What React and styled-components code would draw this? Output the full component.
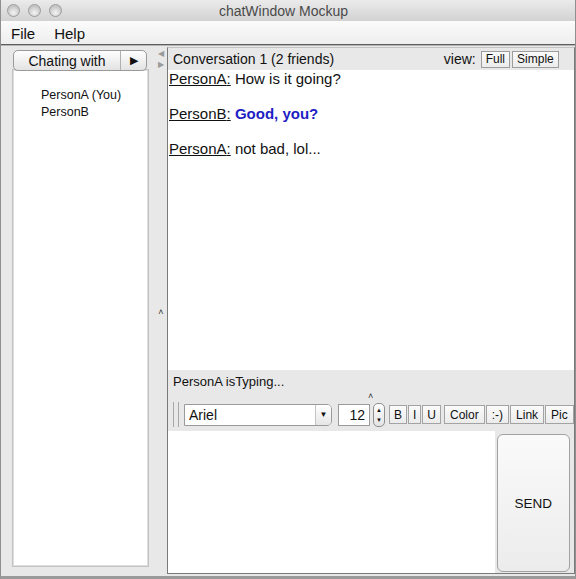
import styled, { createGlobalStyle } from "styled-components";

const GlobalStyle = createGlobalStyle`
    html, body {
        margin: 0;
        padding: 0;
        background: #e8e8e8;
    }
    * {
        box-sizing: border-box;
    }
`;

const Window = styled.div`
    width: 576px;
    height: 579px;
    display: flex;
    flex-direction: column;
    background: #e8e8e8;
    border-left: 1px solid #8f8f8f;
    border-right: 1px solid #8f8f8f;
    border-bottom: 3px solid #9a9a9a;
    font-family: "Liberation Sans", Arial, sans-serif;
    color: #111;
    overflow: hidden;
`;

const TitleBar = styled.div`
    height: 21px;
    flex: none;
    display: flex;
    align-items: center;
    padding-left: 6px;
    background: linear-gradient(#ebebeb, #d2d2d2);
`;

const Lights = styled.div`
    display: flex;
    gap: 8px;
`;

const Light = styled.span`
    width: 13px;
    height: 13px;
    border-radius: 50%;
    border: 1px solid #9c9c9c;
    background: radial-gradient(circle at 50% 70%, #f4f4f4, #c4c4c4 70%);
`;

const Title = styled.div`
    flex: 1;
    text-align: center;
    font-size: 14px;
    color: #4a4a4a;
    margin-right: 70px;
`;

const MenuBar = styled.div`
    height: 24px;
    flex: none;
    display: flex;
    align-items: center;
    gap: 19px;
    padding: 2px 0 0 10px;
    background: linear-gradient(#fbfbfb, #eeeeee);
    border-bottom: 1px solid #5e5e5e;
    box-shadow: 0 1px 0 #b5b5b5;
    font-size: 15px;
`;

const Body = styled.div`
    flex: 1;
    display: flex;
    min-height: 0;
    padding-top: 1px;
`;

const LeftPane = styled.div`
    width: 150px;
    flex: none;
    display: flex;
    flex-direction: column;
    padding: 4px 2px 9px 11px;
`;

const TabButton = styled.div`
    height: 21px;
    margin: 0 2px 0 1px;
    display: flex;
    border: 1px solid #9a9a9a;
    border-radius: 5px;
    background: linear-gradient(#fefefe, #e3e3e3);
    font-size: 14px;
    position: relative;
    z-index: 1;
`;

const TabLabel = styled.div`
    flex: 1;
    display: flex;
    align-items: center;
    justify-content: center;
    border-right: 1px solid #b0b0b0;
`;

const TabArrow = styled.div`
    width: 25px;
    display: flex;
    align-items: center;
    justify-content: center;
    font-size: 11px;
`;

const ListBox = styled.div`
    flex: 1;
    margin-top: -2px;
    background: #fff;
    border: 1px solid #c2c2c2;
    box-shadow: inset 0 0 0 1px #dedede;
    padding: 17px 0 0 28px;
    font-size: 12.5px;
    line-height: 17px;
`;

const Divider = styled.div`
    width: 16px;
    flex: none;
    display: flex;
    flex-direction: column;
    align-items: center;
    padding: 2px 0 0 4px;
    color: #9a9a9a;
    font-size: 8px;
    line-height: 11px;
`;

const Grab = styled.div`
    margin-top: 237px;
    font-size: 9px;
    color: #333;
`;

const RightPane = styled.div`
    flex: 1;
    display: flex;
    flex-direction: column;
    margin: 1px 1px 2px 0;
    border: 1px solid #7a7a7a;
    border-top-color: #c4c4c4;
`;

const ConvHeader = styled.div`
    height: 22px;
    flex: none;
    display: flex;
    align-items: center;
    justify-content: space-between;
    padding: 0 15px 0 5px;
    font-size: 14px;
`;

const ViewSwitch = styled.div`
    display: flex;
    align-items: center;
    gap: 2px;
    font-size: 14px;
`;

const ViewLabel = styled.span`
    margin-right: 3px;
`;

const SmallButton = styled.span`
    height: 17px;
    display: inline-flex;
    align-items: center;
    padding: 0 4px;
    border: 1px solid #9d9d9d;
    background: linear-gradient(#fafafa, #ececec);
    font-size: 12px;
`;

const ChatLog = styled.div`
    flex: 1;
    background: #fff;
    padding: 0 0 0 1px;
    font-size: 15px;
    line-height: 18px;
`;

const Message = styled.p`
    margin: 0 0 17px;
`;

const Sender = styled.span`
    text-decoration: underline;
`;

const Reply = styled.span`
    color: ${p => (p.$bold ? "#1d1dc4" : "#111")};
    font-weight: ${p => (p.$bold ? 700 : 400)};
`;

const TypingBar = styled.div`
    height: 28px;
    flex: none;
    display: flex;
    align-items: center;
    padding: 0 0 6px 5px;
    font-size: 13px;
    position: relative;
`;

const Caret = styled.span`
    position: absolute;
    left: 200px;
    bottom: -3px;
    font-size: 9px;
    color: #333;
`;

const Toolbar = styled.div`
    height: 33px;
    flex: none;
    display: flex;
    align-items: center;
    padding: 0 0 0 5px;
`;

const Grip = styled.div`
    width: 6px;
    height: 25px;
    margin-right: 5px;
    border-left: 1px solid #a8a8a8;
    border-right: 1px solid #a8a8a8;
`;

const Combo = styled.div`
    width: 148px;
    height: 22px;
    display: flex;
    align-items: center;
    background: #fff;
    border: 1px solid #9a9a9a;
    border-radius: 0 5px 5px 0;
    font-size: 14px;
    padding-left: 4px;
`;

const ComboText = styled.span`
    flex: 1;
`;

const ComboArrow = styled.span`
    width: 16px;
    height: 20px;
    display: flex;
    align-items: center;
    justify-content: center;
    border-left: 1px solid #c4c4c4;
    border-radius: 0 4px 4px 0;
    background: linear-gradient(#ffffff, #e6e6e6);
    font-size: 8px;
`;

const SizeField = styled.div`
    width: 32px;
    height: 22px;
    margin-left: 6px;
    display: flex;
    align-items: center;
    justify-content: flex-end;
    padding-right: 4px;
    background: #fff;
    border: 1px solid #9a9a9a;
    font-size: 14px;
`;

const Spinner = styled.div`
    width: 12px;
    height: 24px;
    margin: 0 3px 0 3px;
    display: flex;
    flex-direction: column;
    align-items: center;
    justify-content: space-between;
    padding: 2px 0;
    border: 1px solid #8f8f8f;
    border-radius: 5px;
    background: linear-gradient(#fdfdfd, #e3e3e3);
    font-size: 6px;
    line-height: 8px;
`;

const FormatButton = styled.span`
    height: 19px;
    display: inline-flex;
    align-items: center;
    padding: 0 ${p => (p.$wide ? 5 : 4)}px;
    margin-left: ${p => (p.$gap ? 3 : 1)}px;
    border: 1px solid #a3a3a3;
    background: linear-gradient(#fbfbfb, #ebebeb);
    font-size: 12px;
`;

const InputRow = styled.div`
    height: 142px;
    flex: none;
    display: flex;
`;

const InputArea = styled.div`
    flex: 1;
    background: #fff;
`;

const SendWrap = styled.div`
    width: 79px;
    flex: none;
    padding: 3px 4px 1px 2px;
    display: flex;
`;

const SendButton = styled.div`
    flex: 1;
    display: flex;
    align-items: center;
    justify-content: center;
    border: 1px solid #a2a2a2;
    border-radius: 6px;
    background: linear-gradient(#fafafa, #ececec);
    font-size: 13.5px;
`;

export default function App() {
    const messages = [
        { id: 1, sender: "PersonA", text: "How is it going?" },
        { id: 2, sender: "PersonB", text: "Good, you?", bold: true },
        { id: 3, sender: "PersonA", text: "not bad, lol..." },
    ];
    const tools = ["B", "I", "U", "Color", ":-)", "Link", "Pic"];

    return (
        <>
            <GlobalStyle />
            <Window>
                <TitleBar>
                    <Lights>
                        <Light />
                        <Light />
                        <Light />
                    </Lights>
                    <Title>chatWindow Mockup</Title>
                </TitleBar>
                <MenuBar>
                    <span>File</span>
                    <span>Help</span>
                </MenuBar>
                <Body>
                    <LeftPane>
                        <TabButton>
                            <TabLabel>Chating with</TabLabel>
                            <TabArrow>▶</TabArrow>
                        </TabButton>
                        <ListBox>
                            <div>PersonA (You)</div>
                            <div>PersonB</div>
                        </ListBox>
                    </LeftPane>
                    <Divider>
                        <span>◀</span>
                        <span>▶</span>
                        <Grab>˄</Grab>
                    </Divider>
                    <RightPane>
                        <ConvHeader>
                            <span>Conversation 1 (2 friends)</span>
                            <ViewSwitch>
                                <ViewLabel>view:</ViewLabel>
                                <SmallButton>Full</SmallButton>
                                <SmallButton>Simple</SmallButton>
                            </ViewSwitch>
                        </ConvHeader>
                        <ChatLog>
                            {messages.map(m => (
                                <Message key={m.id}>
                                    <Sender>{m.sender}:</Sender>{" "}
                                    <Reply $bold={m.bold}>{m.text}</Reply>
                                </Message>
                            ))}
                        </ChatLog>
                        <TypingBar>
                            PersonA isTyping...
                            <Caret>˄</Caret>
                        </TypingBar>
                        <Toolbar>
                            <Grip />
                            <Combo>
                                <ComboText>Ariel</ComboText>
                                <ComboArrow>▼</ComboArrow>
                            </Combo>
                            <SizeField>12</SizeField>
                            <Spinner>
                                <span>▲</span>
                                <span>▼</span>
                            </Spinner>
                            {tools.map((t, i) => (
                                <FormatButton key={t} $gap={i === 3} $wide={t.length > 1}>
                                    {t}
                                </FormatButton>
                            ))}
                        </Toolbar>
                        <InputRow>
                            <InputArea />
                            <SendWrap>
                                <SendButton>SEND</SendButton>
                            </SendWrap>
                        </InputRow>
                    </RightPane>
                </Body>
            </Window>
        </>
    );
}
